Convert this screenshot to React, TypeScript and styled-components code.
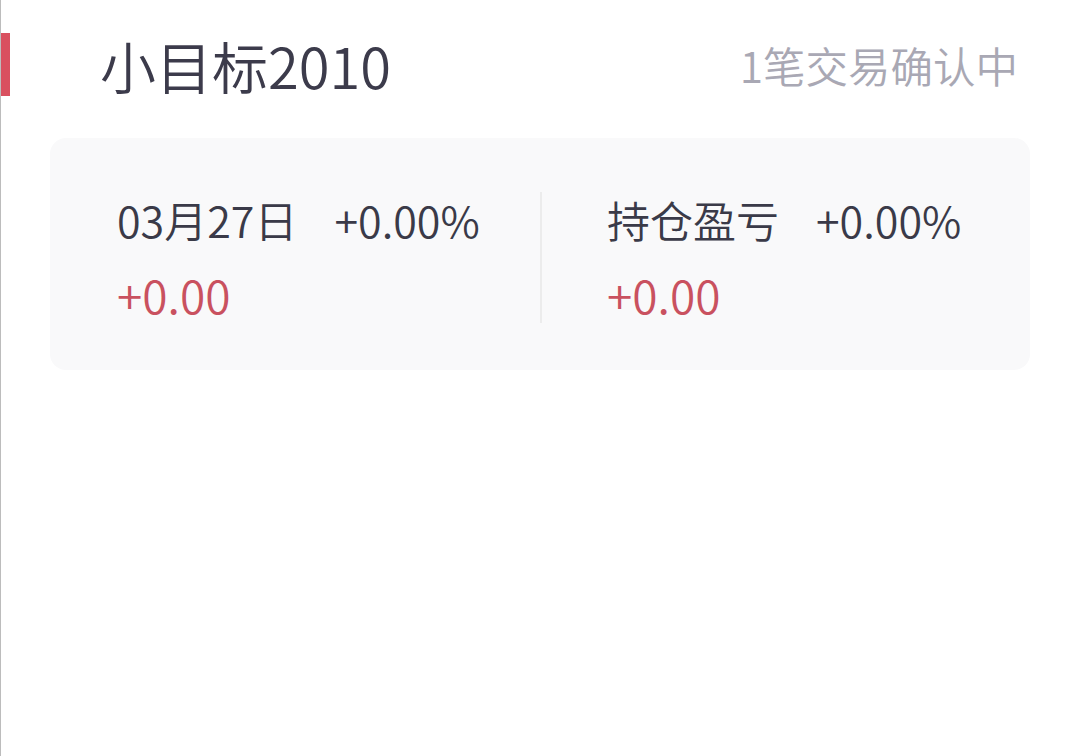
import React from "react";
import styled, { createGlobalStyle } from "styled-components";

const GlobalStyle = createGlobalStyle`
  html, body {
    margin: 0;
    padding: 0;
    background: #ffffff;
  }
  body {
    font-family: "Noto Sans CJK SC", "Noto Sans", sans-serif;
  }
`;

const Page = styled.div`
  width: 1073px;
  height: 756px;
  box-sizing: border-box;
  border-left: 1px solid #bcbcbc;
  background: #ffffff;
  display: flex;
  flex-direction: column;
`;

const Header = styled.div`
  margin-top: 33px;
  height: 63px;
  display: flex;
  align-items: center;
  padding-right: 55px;
`;

const Marker = styled.div`
  width: 9px;
  align-self: stretch;
  background: #d9505f;
`;

const Title = styled.h1`
  margin: 0 0 0 90px;
  font-size: 56px;
  font-weight: 350;
  line-height: 63px;
  color: #3c3b4b;
  flex: 1;
`;

const Pending = styled.span`
  font-size: 42.5px;
  font-weight: 350;
  line-height: 63px;
  color: #a9a8b4;
`;

const Card = styled.div`
  margin: 42px 43px 0 49px;
  background: #f9f9fa;
  border-radius: 16px;
  padding: 54px 0 47px;
  display: flex;
`;

const Column = styled.div<{ $divided?: boolean }>`
  flex: 1;
  box-sizing: border-box;
  height: 131px;
  padding-left: ${(p) => (p.$divided ? "65px" : "67px")};
  border-left: ${(p) => (p.$divided ? "2px solid #ececec" : "none")};
  display: flex;
  flex-direction: column;
`;

const Line = styled.div`
  display: flex;
  gap: 37px;
  font-size: 43px;
  font-weight: 350;
  line-height: 54px;
  color: #3a3a48;
`;

const Amount = styled.div`
  margin-top: 19px;
  font-size: 46px;
  font-weight: 350;
  line-height: 58px;
  color: #c9515f;
`;

const stats = [
  { label: "03月27日", rate: "+0.00%", amount: "+0.00" },
  { label: "持仓盈亏", rate: "+0.00%", amount: "+0.00" },
];

export default function App() {
  return (
    <>
      <GlobalStyle />
      <Page>
        <Header>
          <Marker />
          <Title>小目标2010</Title>
          <Pending>1笔交易确认中</Pending>
        </Header>
        <Card>
          {stats.map((s, i) => (
            <Column key={s.label} $divided={i > 0}>
              <Line>
                <span>{s.label}</span>
                <span>{s.rate}</span>
              </Line>
              <Amount>{s.amount}</Amount>
            </Column>
          ))}
        </Card>
      </Page>
    </>
  );
}
